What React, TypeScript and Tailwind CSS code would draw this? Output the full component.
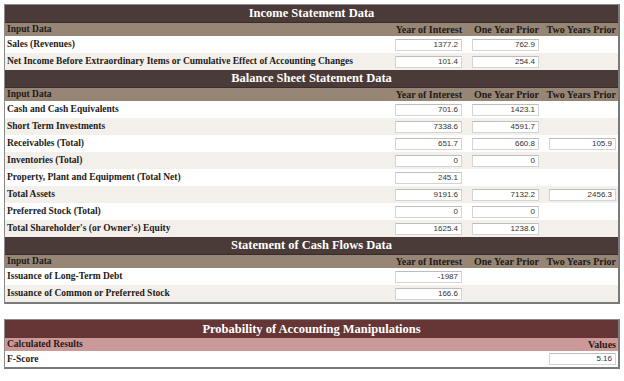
import React from "react";

const serif = { fontFamily: '"Liberation Serif", "DejaVu Serif", serif' };
const sans = { fontFamily: '"Liberation Sans", Arial, sans-serif' };

type Row = { label: string; v: (string | null)[] };

const Val = ({ v }: { v: string | null }) => (
  <div className="w-[77px] shrink-0 flex justify-end pr-[2px]">
    {v !== null ? (
      <div
        className="w-[67px] h-[12px] bg-white border border-[#d4d4d4] border-t-[#bdbdbd] flex items-center justify-end pr-[3px] text-[8px] font-normal text-[#333] leading-none"
        style={sans}
      >
        {v}
      </div>
    ) : null}
  </div>
);

const Section = ({ title, rows }: { title: string; rows: Row[] }) => (
  <div>
    <div className="h-[18px] bg-[#4a3a38] flex items-center justify-center text-white font-bold text-[12.5px] border-b border-[#3a2c2a]" style={serif}>
      {title}
    </div>
    <div className="h-[13px] bg-[#978675] flex items-center text-[9.5px] font-bold text-[#1e1a18]" style={serif}>
      <div className="flex-1 pl-[2px]">Input Data</div>
      <div className="w-[77px] text-right pr-[2px] text-[10px]">Year of Interest</div>
      <div className="w-[77px] text-right pr-[2px] text-[10px]">One Year Prior</div>
      <div className="w-[77px] text-right pr-[2px] text-[10px]">Two Years Prior</div>
    </div>
    {rows.map((r, i) => (
      <div
        key={r.label}
        className={`h-[17px] flex items-center text-[9.5px] font-bold text-[#1e1a18] ${i % 2 === 0 ? "bg-white" : "bg-[#f3f0eb]"}`}
        style={serif}
      >
        <div className="flex-1 pl-[2px] whitespace-nowrap">{r.label}</div>
        <Val v={r.v[0]} />
        <Val v={r.v[1]} />
        <Val v={r.v[2]} />
      </div>
    ))}
  </div>
);

export default function App() {
  const income: Row[] = [
    { label: "Sales (Revenues)", v: ["1377.2", "762.9", null] },
    { label: "Net Income Before Extraordinary Items or Cumulative Effect of Accounting Changes", v: ["101.4", "254.4", null] },
  ];
  const balance: Row[] = [
    { label: "Cash and Cash Equivalents", v: ["701.6", "1423.1", null] },
    { label: "Short Term Investments", v: ["7338.6", "4591.7", null] },
    { label: "Receivables (Total)", v: ["651.7", "660.8", "105.9"] },
    { label: "Inventories (Total)", v: ["0", "0", null] },
    { label: "Property, Plant and Equipment (Total Net)", v: ["245.1", null, null] },
    { label: "Total Assets", v: ["9191.6", "7132.2", "2456.3"] },
    { label: "Preferred Stock (Total)", v: ["0", "0", null] },
    { label: "Total Shareholder's (or Owner's) Equity", v: ["1625.4", "1238.6", null] },
  ];
  const cash: Row[] = [
    { label: "Issuance of Long-Term Debt", v: ["-1987", null, null] },
    { label: "Issuance of Common or Preferred Stock", v: ["166.6", null, null] },
  ];
  return (
    <div className="w-[624px] h-[381px] bg-white pt-[4px] px-[4px]">
      <div className="border border-[#8a8a8a] border-r-2 border-r-[#7a7a7a] border-b-2 border-b-[#7a7a7a]">
        <Section title="Income Statement Data" rows={income} />
        <Section title="Balance Sheet Statement Data" rows={balance} />
        <Section title="Statement of Cash Flows Data" rows={cash} />
      </div>
      <div className="mt-[15px] border border-[#8a8a8a] border-r-2 border-r-[#7a7a7a] border-b-2 border-b-[#7a7a7a]">
        <div className="h-[18px] bg-[#663535] flex items-center justify-center text-white font-bold text-[12.5px]" style={serif}>
          Probability of Accounting Manipulations
        </div>
        <div className="h-[13px] bg-[#cc9999] flex items-center text-[9.5px] font-bold text-[#1e1a18]" style={serif}>
          <div className="flex-1 pl-[2px]">Calculated Results</div>
          <div className="w-[77px] text-right pr-[2px] text-[10px]">Values</div>
        </div>
        <div className="h-[16px] bg-white flex items-center text-[9.5px] font-bold text-[#1e1a18]" style={serif}>
          <div className="flex-1 pl-[2px]">F-Score</div>
          <Val v="5.16" />
        </div>
      </div>
    </div>
  );
}
